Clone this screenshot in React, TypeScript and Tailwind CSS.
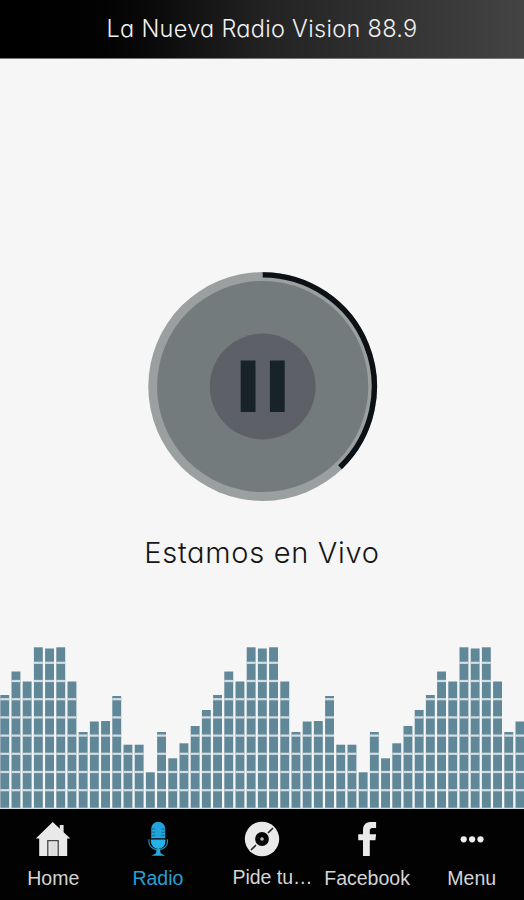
import type { ReactNode } from "react";

interface Tab {
  label: string;
  icon: ReactNode;
  active?: boolean;
  labelClass?: string;
}

// Top edge of each equalizer column, the pattern repeats across the screen
const columnTops = [
  49, 25.5, 35.5, 1.3, 2.5, 1.3, 35.5, 86, 75.5, 75, 50, 98.7, 98.7, 126.3, 86, 112.3, 97.3, 80, 64,
];
const columns = Array.from({ length: 47 }, (_, i) => columnTops[i % columnTops.length]);
const gridLines = [15.7, 33.9, 52.1, 70.3, 88.5, 106.7, 124.9, 143.1];

function HomeIcon() {
  return (
    <svg width="36" height="36" viewBox="0 0 36 36">
      <path d="M24.8 4h3.8v8l-3.8-4z" fill="#e4e4e4" />
      <path d="M17.7 1 .8 17.5h3.4V35h28V17.5h3.1z" fill="#e9e9e9" />
      <path d="M12.8 35V19.6h10.4V35" fill="none" stroke="#444" strokeWidth="1.3" />
      <path d="M15 21.3h6.3V35H15z" fill="#ddd" />
    </svg>
  );
}

function MicIcon() {
  return (
    <svg width="36" height="36" viewBox="0 0 36 36">
      <path d="M11.2 17.2V7.8a7 7 0 0 1 14 0v9.4z" fill="#22a4da" />
      <path d="M11.2 8h4M21.2 8h4M11.2 11.2h4M21.2 11.2h4M11.2 14.4h4M21.2 14.4h4" stroke="#0b6a92" strokeWidth="0.9" />
      <path d="M10.9 18.6h14.6v2a7.3 7.3 0 0 1-14.6 0z" fill="#25b0e8" />
      <path d="M8.9 18.3v2.4c0 4.8 4.2 8 9.3 8s9.3-3.2 9.3-8v-2.4" fill="none" stroke="#1c8fbf" strokeWidth="1.2" />
      <path d="M16.5 28.3h3.6l.5 4 4.5 2.5H11.5l4.5-2.5z" fill="#25a9df" />
    </svg>
  );
}

function DiscIcon() {
  return (
    <svg width="36" height="36" viewBox="0 0 36 36">
      <circle cx="18" cy="18" r="17.2" fill="#e9e9e9" />
      <path d="m24 12 5-5M12 24l-5 5" stroke="#222" strokeWidth="1.6" />
      <circle cx="18" cy="18" r="6.9" fill="#050505" />
      <circle cx="18" cy="18" r="1.8" fill="#bbb" />
    </svg>
  );
}

function FacebookIcon() {
  return (
    <svg width="36" height="36" viewBox="0 0 36 36">
      <path d="M14 35V19.3H9.2v-6H14V9.2C14 3.6 17 1 22.3 1h4.8v6h-3.6c-2 0-2.7 1-2.7 2.7v3.6h6.3l-.7 6h-5.6V35z" fill="#e9e9e9" />
    </svg>
  );
}

function MoreIcon() {
  return (
    <svg width="36" height="36" viewBox="0 0 36 36">
      <circle cx="9.7" cy="18.3" r="3.1" fill="#eee" />
      <circle cx="18.1" cy="18.3" r="3.1" fill="#eee" />
      <circle cx="26.5" cy="18.3" r="3.1" fill="#eee" />
    </svg>
  );
}

const tabs: Tab[] = [
  { label: "Home", icon: <HomeIcon /> },
  { label: "Radio", icon: <MicIcon />, active: true },
  { label: "Pide tu…", icon: <DiscIcon />, labelClass: "pl-5 -mt-px" },
  { label: "Facebook", icon: <FacebookIcon /> },
  { label: "Menu", icon: <MoreIcon /> },
];

function PauseButton() {
  return (
    <button type="button" aria-label="Pause" className="mt-[212px] block">
      <svg width="232" height="232" viewBox="0 0 232 232">
        <circle cx="116.7" cy="115.5" r="114.4" fill="#9a9f9f" />
        <circle cx="116.7" cy="115.5" r="105.6" fill="#747b7d" />
        <path d="M116.7 3.9A111.7 111.7 0 0 1 194 196.2" fill="none" stroke="#0b1114" strokeWidth="5.4" />
        <circle cx="116.7" cy="115.5" r="52.9" fill="#5d6167" />
        <path d="M94.7 89.5h14.8V141H94.7zM123.9 89.5h14.8V141h-14.8z" fill="#182326" />
      </svg>
    </button>
  );
}

function Equalizer() {
  return (
    <svg width="524" height="163" viewBox="0 0 524 163" className="block">
      {columns.map((top, i) => (
        <g key={i}>
          <rect x={0.3 + i * 11.2} y={top} width="8.9" height={162 - top} fill="#618899" />
          {gridLines
            .filter((y) => y > top)
            .map((y) => (
              <rect key={y} x={0.3 + i * 11.2} y={y} width="8.9" height="2.2" fill="#d3dde2" />
            ))}
        </g>
      ))}
      <rect y="161.7" width="524" height="1.3" fill="#d3e0e4" />
    </svg>
  );
}

export default function App() {
  return (
    <div className="flex h-[900px] w-[524px] flex-col overflow-hidden bg-[#f6f6f6]">
      <header className="flex h-[59px] shrink-0 items-center justify-center border-b border-[#777] bg-linear-to-r from-black via-[#222] to-[#444]">
        <h1 className="whitespace-nowrap font-['Inter',sans-serif] text-[23.5px] leading-8 font-[350] tracking-[0.3px] text-[#f0f0f0] [font-feature-settings:'cv11']">
          La Nueva Radio Vision 88.9
        </h1>
      </header>

      <main className="flex flex-1 flex-col items-center">
        <PauseButton />
        <p className="mt-[30px] whitespace-nowrap font-['Inter',sans-serif] text-[29px] leading-10 font-light tracking-[0.7px] text-[#151515] [font-feature-settings:'cv11']">
          Estamos en Vivo
        </p>
      </main>

      <Equalizer />

      <nav className="grid h-[91px] shrink-0 grid-cols-5 bg-[#020202] pl-px">
        {tabs.map((tab) => (
          <a
            key={tab.label}
            className={`flex flex-col items-center pt-3 font-['Liberation_Sans',sans-serif] text-[19.5px] leading-6 whitespace-nowrap ${
              tab.active ? "text-[#25a0d5]" : "text-[#d5d5d5]"
            }`}
          >
            {tab.icon}
            <span className="mt-[9px]">
              <span className={`block ${tab.labelClass ?? ""}`}>{tab.label}</span>
            </span>
          </a>
        ))}
      </nav>
    </div>
  );
}
